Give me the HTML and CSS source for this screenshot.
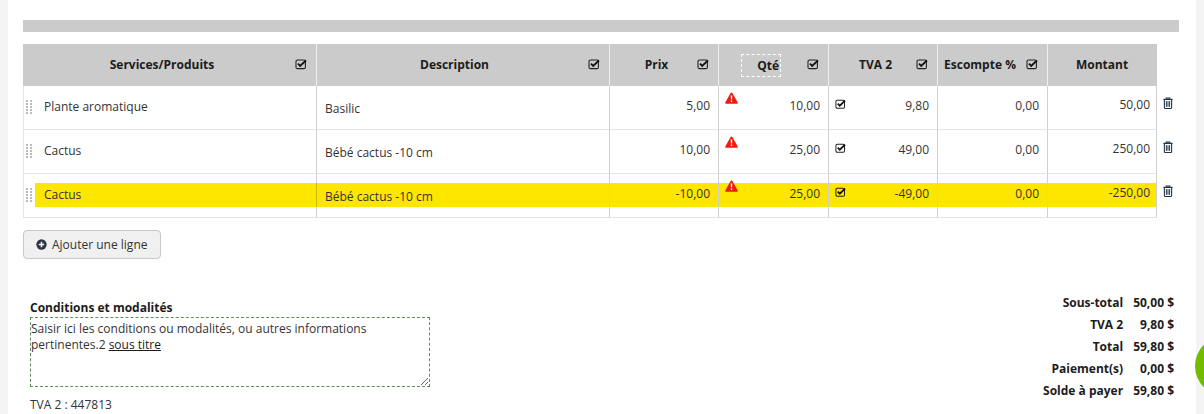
FILE: index.html
```html
<!DOCTYPE html>
<html lang="fr">
<head>
<meta charset="utf-8">
<title>Facture</title>
<link rel="stylesheet" href="styles.css">
</head>
<body>
<svg class="defs" width="0" height="0" aria-hidden="true">
  <symbol id="chk" viewBox="0 0 12 12">
    <rect x="1" y="2" width="9.4" height="8.6" rx="1.4" fill="none" stroke="currentColor" stroke-width="1.1"/>
    <path d="M3 5.6l2.2 2.3L11 2.4" fill="none" stroke="#111" stroke-width="1.9"/>
  </symbol>
  <symbol id="warn" viewBox="0 0 13 12">
    <path d="M6.5 0.4c.4 0 .7.2.9.6l5.3 9.4c.4.7 0 1.4-.8 1.4H1.1c-.8 0-1.2-.7-.8-1.4L5.6 1c.2-.4.5-.6.9-.6z" fill="#ee1c0e"/>
    <path d="M5.7 3.6h1.6L7.1 7.6H5.9z M5.8 8.5h1.4v1.5H5.8z" fill="#fff"/>
  </symbol>
  <symbol id="trash" viewBox="0 0 10 12">
    <path d="M3.2 2V1h3.6v1M0.4 2.4h9.2M1.4 2.6v8c0 .6.3.9.8.9h5.6c.5 0 .8-.3.8-.9v-8" fill="none" stroke="#24384a" stroke-width="1.1"/>
    <path d="M3.4 4.2v5.6M5 4.2v5.6M6.6 4.2v5.6" fill="none" stroke="#24384a" stroke-width="1"/>
  </symbol>
</svg>
<div class="page">
  <div class="strip"></div>
  <main class="main">
    <div class="bar"></div>
    <table class="lines">
      <colgroup>
        <col class="c1"><col class="c2"><col class="c3"><col class="c4"><col class="c5"><col class="c6"><col class="c7"><col class="c8">
      </colgroup>
      <thead>
        <tr>
          <th><div class="th"><span class="th-label">Services/Produits</span><svg class="ico-chk"><use href="#chk"/></svg></div></th>
          <th><div class="th desc-head"><span class="th-label">Description</span><svg class="ico-chk"><use href="#chk"/></svg></div></th>
          <th><div class="th"><span class="th-label">Prix</span><svg class="ico-chk"><use href="#chk"/></svg></div></th>
          <th><div class="th qty-head"><span class="th-label"><span class="dashed">Qté</span></span><svg class="ico-chk"><use href="#chk"/></svg></div></th>
          <th><div class="th"><span class="th-label">TVA 2</span><svg class="ico-chk"><use href="#chk"/></svg></div></th>
          <th><div class="th tight"><span class="th-label">Escompte %</span><svg class="ico-chk"><use href="#chk"/></svg></div></th>
          <th><div class="th plain"><span class="th-label">Montant</span></div></th>
          <th class="blank"></th>
        </tr>
      </thead>
      <tbody>
        <tr>
          <td class="first"><div class="svc"><span class="handle"></span><span>Plante aromatique</span></div></td>
          <td class="desc">Basilic</td>
          <td class="num">5,00</td>
          <td class="num"><div class="split"><svg class="ico-warn"><use href="#warn"/></svg><span class="val">10,00</span></div></td>
          <td class="num"><div class="split"><svg class="ico-chk-row"><use href="#chk"/></svg><span class="val">9,80</span></div></td>
          <td class="num">0,00</td>
          <td class="num amount">50,00</td>
          <td class="del"><svg class="ico-trash"><use href="#trash"/></svg></td>
        </tr>
        <tr>
          <td class="first"><div class="svc"><span class="handle"></span><span>Cactus</span></div></td>
          <td class="desc">Bébé cactus -10 cm</td>
          <td class="num">10,00</td>
          <td class="num"><div class="split"><svg class="ico-warn"><use href="#warn"/></svg><span class="val">25,00</span></div></td>
          <td class="num"><div class="split"><svg class="ico-chk-row"><use href="#chk"/></svg><span class="val">49,00</span></div></td>
          <td class="num">0,00</td>
          <td class="num amount">250,00</td>
          <td class="del"><svg class="ico-trash"><use href="#trash"/></svg></td>
        </tr>
        <tr class="credit">
          <td class="first"><div class="svc"><span class="handle"></span><span>Cactus</span></div></td>
          <td class="desc">Bébé cactus -10 cm</td>
          <td class="num">-10,00</td>
          <td class="num"><div class="split"><svg class="ico-warn"><use href="#warn"/></svg><span class="val">25,00</span></div></td>
          <td class="num"><div class="split"><svg class="ico-chk-row"><use href="#chk"/></svg><span class="val">-49,00</span></div></td>
          <td class="num">0,00</td>
          <td class="num amount">-250,00</td>
          <td class="del"><svg class="ico-trash"><use href="#trash"/></svg></td>
        </tr>
      </tbody>
    </table>
    <button class="add" type="button">
      <svg class="ico-plus" viewBox="0 0 12 12"><circle cx="6" cy="6" r="5.6" fill="#2b3440"/><path d="M6 3v6M3 6h6" stroke="#f0f0f0" stroke-width="1.8"/></svg>
      Ajouter une ligne
    </button>
    <section class="foot">
      <div class="terms">
        <h4 class="terms-title">Conditions et modalités</h4>
        <div class="terms-box">Saisir ici les conditions ou modalités, ou autres informations pertinentes.2 <u>sous titre</u></div>
        <p class="tax-no">TVA 2 : 447813</p>
      </div>
      <dl class="totals">
        <dt>Sous-total</dt><dd>50,00 $</dd>
        <dt>TVA 2</dt><dd>9,80 $</dd>
        <dt>Total</dt><dd>59,80 $</dd>
        <dt>Paiement(s)</dt><dd>0,00 $</dd>
        <dt>Solde à payer</dt><dd>59,80 $</dd>
      </dl>
    </section>
  </main>
  <div class="strip"></div>
</div>
<div class="bubble"></div>
</body>
</html>
```

FILE: styles.css
```css
* { box-sizing: border-box; }
html, body { margin: 0; height: 414px; overflow: hidden; background: #fff; }
body { font-family: "Open Sans", "Liberation Sans", sans-serif; font-size: 12px; line-height: 16px; color: #333; position: relative; }
.defs { position: absolute; }
.page { display: flex; height: 414px; }
.strip { flex: none; width: 8px; background: #f4f4f4; }
.main { flex: 1; padding: 20px 17px 0 15px; min-width: 0; }
.bar { height: 12px; background: #cbcbcb; margin-bottom: 12px; }

.lines { table-layout: fixed; border-collapse: separate; border-spacing: 0; width: 1155px; }
.c1 { width: 294px; } .c2 { width: 293px; } .c3 { width: 109px; } .c4 { width: 110px; }
.c5 { width: 109px; } .c6 { width: 110px; } .c7 { width: 109px; } .c8 { width: 21px; }

th { height: 42px; padding: 0; background: #cbcbcb; border-right: 1px solid #eee; font-weight: 700; color: #1c1c1c; }
th.blank { background: none; border: 0; }
th:nth-child(7) { border-right-color: #cbcbcb; }
.th { display: flex; align-items: center; padding-right: 9px; }
.th.plain { padding-right: 0; }
.th-label { flex: 1; text-align: center; padding-left: 6px; }
.plain .th-label { padding-left: 0; }
.desc-head .th-label { padding-left: 4px; }
.qty-head .th-label { padding-left: 0; padding-right: 4px; }
.tight .th-label { padding-left: 2px; padding-right: 6px; }
.dashed { display: inline-block; width: 40px; height: 23px; line-height: 21px; border: 1px dashed #fff; text-align: right; padding-right: 1px; }
.ico-chk { width: 12px; height: 12px; color: #222; margin-top: -2px; }

td { height: 44px; padding: 0; vertical-align: top; border-right: 1px solid rgba(0,0,0,.18); border-bottom: 1px solid rgba(0,0,0,.1); }
td.first { border-left: 1px solid rgba(0,0,0,.1); padding: 13px 7px 0 2px; }
td.desc { padding: 15px 8px 0; }
td.num { padding: 12px 8px 0 6px; text-align: right; }
td.amount { padding: 11px 6px 0 6px; }
td.del { border: 0; padding: 11px 0 0 6px; }

.svc { display: flex; align-items: flex-start; gap: 12px; }
.handle { flex: none; width: 6px; height: 14px; margin-top: 1px; background-image: radial-gradient(circle at 1px 1px, #bbb 1px, transparent 1px); background-size: 4px 3px; }
.split { display: flex; justify-content: space-between; align-items: flex-start; }
.val { display: block; }
.ico-warn { width: 13px; height: 12px; margin-top: -6px; }
.ico-chk-row { width: 11px; height: 12px; color: #222; }
.ico-trash { width: 10px; height: 12px; display: block; }

.credit td:not(.del) { background: linear-gradient(#ffe600, #ffe600) no-repeat 0 9px / 100% 24px; }
.credit td.first { background-position: 11px 9px; }

.add { display: flex; align-items: center; gap: 5px; height: 29px; width: 138px; margin: 12px 0 0; padding: 0 0 0 12px; background: #f0f0f0; border: 1px solid #c8c8c8; border-radius: 4px; font: inherit; color: #333; }
.ico-plus { width: 11px; height: 11px; }

.foot { display: flex; justify-content: space-between; align-items: flex-start; margin-top: 34px; padding: 0 5px 0 7px; }
.terms-title { margin: 7px 0 1px; font-size: 12px; line-height: 16px; font-weight: 700; color: #1c1c1c; }
.terms-box { width: 400px; height: 70px; padding: 3px 0; border: 1px dashed #5f8f56; overflow: hidden; resize: both; color: #333; }
.terms-box u { color: #1c1c1c; }
.tax-no { margin: 10px 0 0; }
.totals { display: grid; grid-template-columns: auto auto; column-gap: 10px; row-gap: 6px; margin: 2px 0 0; text-align: right; font-weight: 700; color: #1c1c1c; }
.totals dd { margin: 0; }
.bubble { position: absolute; left: 1195px; top: 336px; width: 60px; height: 60px; border-radius: 50%; background: #72bb00; }
```
